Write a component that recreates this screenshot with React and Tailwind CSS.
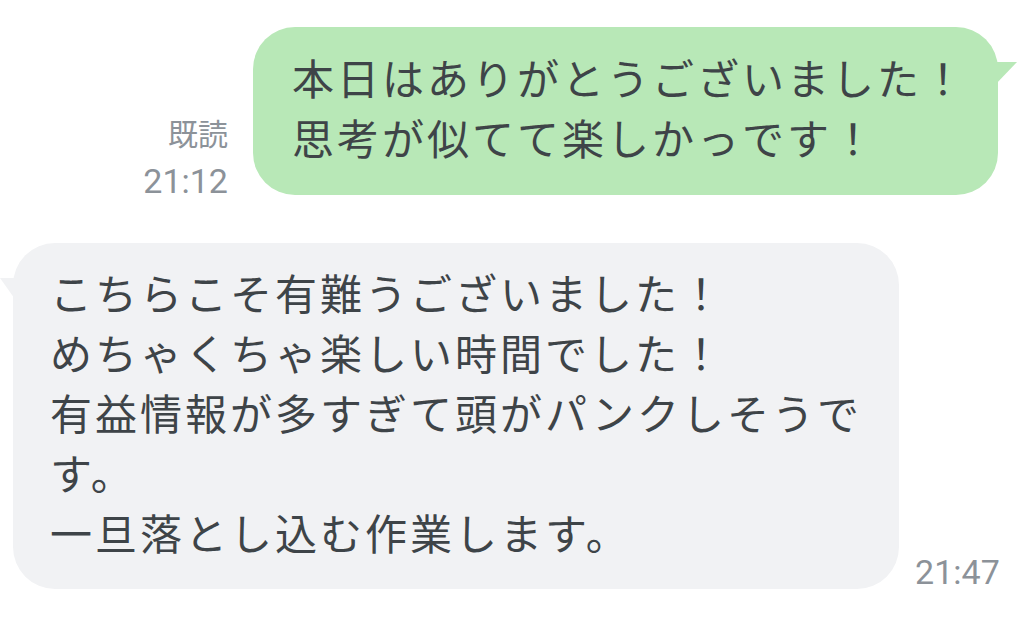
import React from "react";

const font = { fontFamily: "Roboto, 'Noto Sans CJK JP', sans-serif" };

const App = () => {
  return (
    <div className="w-[1023px] h-[624px] bg-white overflow-hidden" style={font}>
      {/* sent message */}
      <div className="flex justify-end items-end pt-[27px] pr-[25px]">
        <div className="flex flex-col items-end gap-[14px] mr-[25px] mb-[-3px] text-[#8c9299] leading-none">
          <span className="text-[30px]">既読</span>
          <span className="text-[34px]">21:12</span>
        </div>
        <div className="relative bg-[#b8e8b7] rounded-[42px] pl-[39px] pr-[31px] py-[24px]">
          <svg
            className="absolute top-[35px] right-[-20px]"
            width="30"
            height="26"
            viewBox="0 0 30 26"
          >
            <polygon points="0,0 29,0 6,24 0,24" fill="#b8e8b7" />
          </svg>
          <p className="text-[42px] leading-[60px] tracking-[3px] text-[#3e4448] whitespace-nowrap">
            本日はありがとうございました！
            <br />
            思考が似てて楽しかっです！
          </p>
        </div>
      </div>

      {/* received message */}
      <div className="flex items-end pt-[48px] pl-[13px]">
        <div className="relative bg-[#f1f2f4] rounded-[42px] pl-[37px] pr-[37px] py-[23px]">
          <svg
            className="absolute top-[35px] left-[-13px]"
            width="30"
            height="26"
            viewBox="0 0 30 26"
          >
            <polygon points="0,0 29,0 29,24 17,24" fill="#f1f2f4" />
          </svg>
          <p className="text-[42px] leading-[60px] tracking-[3px] text-[#3e4448] whitespace-nowrap">
            こちらこそ有難うございました！
            <br />
            めちゃくちゃ楽しい時間でした！
            <br />
            有益情報が多すぎて頭がパンクしそうで
            <br />
            す。
            <br />
            一旦落とし込む作業します。
          </p>
        </div>
        <span className="ml-[16px] text-[34px] leading-none text-[#8c9299]">
          21:47
        </span>
      </div>
    </div>
  );
};

export default App;
